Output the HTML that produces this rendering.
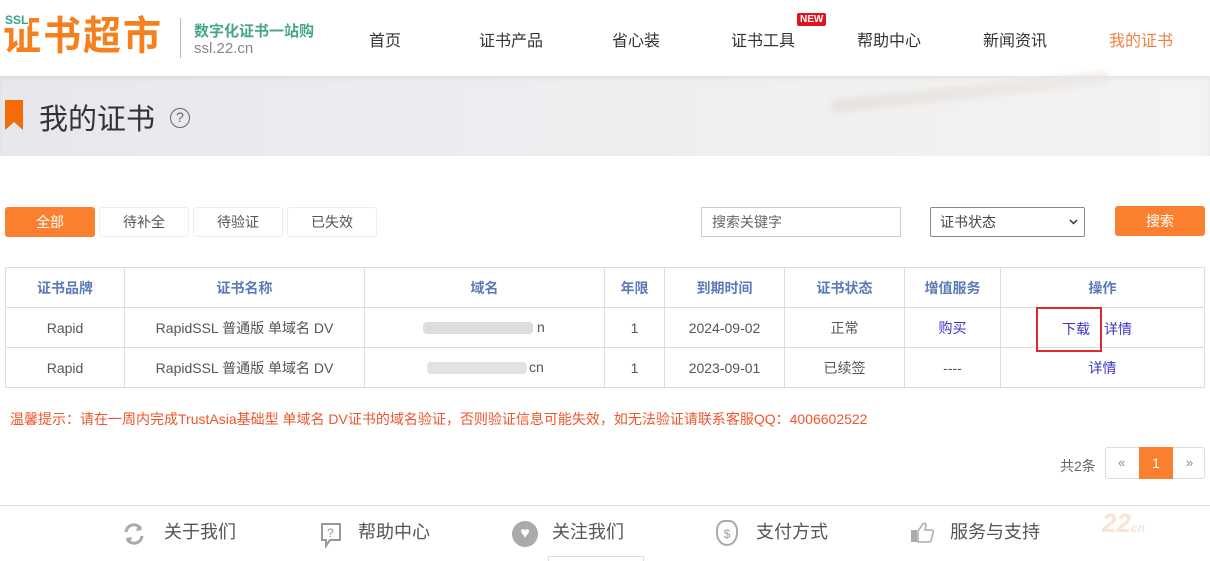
<!DOCTYPE html>
<html><head><meta charset="utf-8"><style>
*{margin:0;padding:0;box-sizing:border-box}
body{width:1210px;height:561px;overflow:hidden;background:#fff;font-family:"Liberation Sans","Noto Sans CJK SC",sans-serif;color:#333;position:relative}
.abs{position:absolute}
.nav a{position:absolute;top:27px;font-size:16px;color:#333;text-decoration:none;white-space:nowrap}
.btn{position:absolute;top:207px;height:30px;width:90px;border:1px solid #eee;border-radius:3px;text-align:center;line-height:28px;font-size:14px;color:#555;background:#fff}
table{position:absolute;left:5px;top:267px;border-collapse:collapse;width:1200px;font-size:14px}
td,th{border:1px solid #ddd;height:40px;text-align:center;color:#555;font-weight:normal}
th{color:#5a7ab8;font-weight:bold}
.lk{color:#3b35c7}
.fi{position:absolute;top:518px;font-size:18px;color:#555}
</style></head><body>
<div class="abs" style="left:3px;top:12px;font-size:38px;font-weight:bold;color:#f7801e;letter-spacing:2px;line-height:50px;transform:scaleY(1.05)">证书超市</div>
<div class="abs" style="left:5px;top:14px;font-size:12px;color:#3aa38a;font-weight:bold;background:#fff;line-height:12px;padding-right:1px">SSL</div>
<div class="abs" style="left:180px;top:18px;width:1px;height:40px;background:#bbb"></div>
<div class="abs" style="left:194px;top:20px;font-size:15px;font-weight:bold;color:#47a785">数字化证书一站购</div>
<div class="abs" style="left:194px;top:40px;font-size:15px;color:#888">ssl.22.cn</div>
<div class="nav">
<a style="left:369px">首页</a><a style="left:479px">证书产品</a><a style="left:612px">省心装</a><a style="left:731px">证书工具</a><a style="left:857px">帮助中心</a><a style="left:983px">新闻资讯</a><a style="left:1109px;color:#f08040">我的证书</a>
</div>
<div class="abs" style="left:797px;top:13px;background:#e0141e;color:#fff;font-size:10px;font-weight:bold;padding:0 3px;line-height:13px;border-radius:2px">NEW</div>
<div class="abs" style="left:0;top:76px;width:1210px;height:80px;background:linear-gradient(90deg,#e7e8ec 0%,#ecedf0 40%,#f1f0ef 70%,#f3f3f5 100%);box-shadow:inset 0 3px 4px rgba(0,0,0,.05)"></div>
<div class="abs" style="left:830px;top:85px;width:280px;height:14px;background:linear-gradient(90deg,#e2dcd6,#ece6e0);transform:rotate(-6deg);opacity:.6;border-radius:8px;filter:blur(2px)"></div>
<svg class="abs" style="left:5px;top:100px" width="18" height="30"><path d="M0 0H18V30L9 22L0 30Z" fill="#f56b0a"/></svg>
<div class="abs" style="left:39px;top:96px;font-size:29px;color:#333">我的证书</div>
<div class="abs" style="left:170px;top:108px;width:20px;height:20px;border:1.5px solid #666;border-radius:50%;font-size:14px;text-align:center;line-height:17px;color:#666">?</div>
<div class="btn" style="left:5px;background:#fa802f;border-color:#fa802f;color:#fff">全部</div>
<div class="btn" style="left:99px">待补全</div>
<div class="btn" style="left:193px">待验证</div>
<div class="btn" style="left:287px">已失效</div>
<div class="abs" style="left:701px;top:207px;width:200px;height:30px;border:1px solid #ccc;font-size:14px;color:#666;padding-left:10px;line-height:28px">搜索关键字</div>
<div class="abs" style="left:930px;top:207px;width:155px;height:30px;border:1px solid #888;border-radius:2px;font-size:14px;color:#444;padding-left:9px;line-height:28px">证书状态<svg style="position:absolute;right:6px;top:11px" width="9" height="6"><path d="M1 1L4.5 4.5L8 1" stroke="#333" stroke-width="1.5" fill="none"/></svg></div>
<div class="abs" style="left:1115px;top:206px;width:90px;height:30px;background:#fa802f;border-radius:3px;color:#fff;font-size:14px;text-align:center;line-height:30px">搜索</div>
<table>
<tr><th style="width:119px">证书品牌</th><th style="width:240px">证书名称</th><th style="width:240px">域名</th><th style="width:60px">年限</th><th style="width:120px">到期时间</th><th style="width:120px">证书状态</th><th style="width:96px">增值服务</th><th>操作</th></tr>
<tr><td>Rapid</td><td>RapidSSL 普通版 单域名 DV</td><td style="position:relative"><span style="position:absolute;left:58px;top:14px;width:110px;height:12px;background:#ddd;border-radius:4px"></span><span style="position:absolute;left:172px;top:11px">n</span></td><td>1</td><td>2024-09-02</td><td>正常</td><td class="lk">购买</td><td style="position:relative"><span class="lk" style="position:absolute;left:61px;top:11px">下载</span><span class="lk" style="position:absolute;left:103px;top:11px">详情</span><div style="position:absolute;left:35px;top:-1px;width:66px;height:45px;border:2px solid #e0282f"></div></td></tr>
<tr><td>Rapid</td><td>RapidSSL 普通版 单域名 DV</td><td style="position:relative"><span style="position:absolute;left:62px;top:14px;width:100px;height:12px;background:#e2e2e2;border-radius:4px"></span><span style="position:absolute;left:164px;top:11px">cn</span></td><td>1</td><td>2023-09-01</td><td>已续签</td><td>----</td><td class="lk">详情</td></tr>
</table>
<div class="abs" style="left:10px;top:409px;font-size:14px;color:#f0552a">温馨提示：请在一周内完成TrustAsia基础型 单域名 DV证书的域名验证，否则验证信息可能失效，如无法验证请联系客服QQ：4006602522</div>
<div class="abs" style="left:1060px;top:456px;font-size:14px;color:#666">共2条</div>
<div class="abs" style="left:1105px;top:447px;width:100px;height:32px;border:1px solid #ddd;border-radius:3px;font-size:13px;color:#888">
<span class="abs" style="left:12px;top:7px">«</span>
<span class="abs" style="left:33px;top:-1px;width:34px;height:32px;background:#fa802f;color:#fff;text-align:center;line-height:32px;font-size:14px">1</span>
<span class="abs" style="left:80px;top:7px">»</span></div>
<div class="abs" style="left:0;top:505px;width:1210px;height:1px;background:#ddd"></div>
<svg class="abs" style="left:122px;top:522px" width="24" height="24"><path d="M4 10A8 8 0 0 1 19 7M20 14A8 8 0 0 1 5 17" stroke="#aaa" stroke-width="3" fill="none"/><path d="M16 3L20 8L14 9Z M8 21L4 16L10 15Z" fill="#aaa"/></svg>
<div class="fi" style="left:164px">关于我们</div>
<svg class="abs" style="left:320px;top:522px" width="22" height="26"><path d="M2 2H20V18H10L6 24V18H2Z" stroke="#999" stroke-width="2" fill="none"/><text x="7" y="15" font-size="12" fill="#999" font-family="Liberation Sans">?</text></svg>
<div class="fi" style="left:358px">帮助中心</div>
<div class="abs" style="left:512px;top:521px;width:26px;height:26px;background:#aaa;border-radius:50%;color:#fff;text-align:center;font-size:16px;line-height:26px">♥</div>
<div class="fi" style="left:552px">关注我们</div>
<div class="abs" style="left:716px;top:520px;width:22px;height:26px;border:2px solid #aaa;border-radius:40% 40% 50% 50%;font-size:12px;color:#999;text-align:center;line-height:24px">$</div>
<div class="fi" style="left:756px">支付方式</div>
<svg class="abs" style="left:910px;top:520px" width="26" height="24"><rect x="1" y="10" width="6" height="12" fill="#aaa"/><path d="M8 11L13 4Q15 2 16 5L15 10H22Q24 11 23 13L21 21Q20 22 18 22H8Z" stroke="#aaa" stroke-width="1.5" fill="none"/></svg>
<div class="fi" style="left:950px">服务与支持</div>
<div class="abs" style="left:1102px;top:508px;font-size:26px;font-weight:bold;font-style:italic;color:#fbe3d4">22<span style="font-size:12px">cn</span></div>
<div class="abs" style="left:548px;top:556px;width:96px;height:5px;border:1px solid #ddd;border-bottom:none"></div>
</body></html>
